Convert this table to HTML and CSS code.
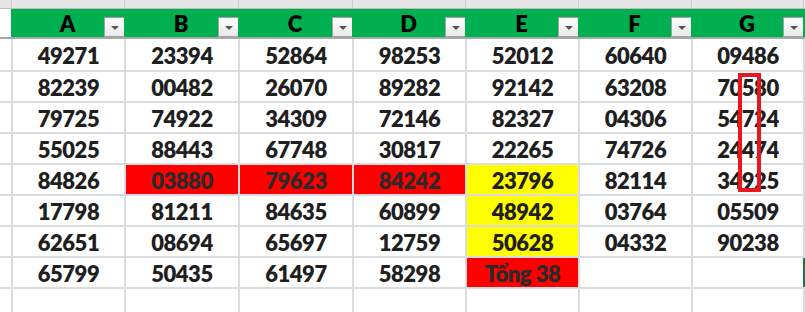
FILE: index.html
```html
<!DOCTYPE html>
<html lang="vi">
<head>
<meta charset="utf-8">
<title>Bảng số</title>
<link rel="stylesheet" href="styles.css">
</head>
<body>
<div class="sheet">
  <div class="grid strip">
    <span class="lead"></span><span class="sc"></span><span class="sc"></span><span class="sc"></span><span class="sc"></span><span class="sc"></span><span class="sc"></span><span class="sc"></span><span class="sc"></span>
  </div>
  <div class="grid hdr">
    <span class="lead"></span>
    <div class="hc"><span class="hl">A</span><span class="fb"></span></div>
    <div class="hc"><span class="hl">B</span><span class="fb"></span></div>
    <div class="hc"><span class="hl">C</span><span class="fb"></span></div>
    <div class="hc"><span class="hl">D</span><span class="fb"></span></div>
    <div class="hc"><span class="hl">E</span><span class="fb"></span></div>
    <div class="hc"><span class="hl">F</span><span class="fb"></span></div>
    <div class="hc"><span class="hl">G</span><span class="fb"></span></div>
    <span class="hend"></span>
  </div>
  <div class="grid row first">
    <span class="lead"></span><span class="c">49271</span><span class="c">23394</span><span class="c">52864</span><span class="c">98253</span><span class="c">52012</span><span class="c">60640</span><span class="c">09486</span><span class="c"></span>
  </div>
  <div class="grid row">
    <span class="lead"></span><span class="c">82239</span><span class="c">00482</span><span class="c">26070</span><span class="c">89282</span><span class="c">92142</span><span class="c">63208</span><span class="c">70580</span><span class="c"></span>
  </div>
  <div class="grid row">
    <span class="lead"></span><span class="c">79725</span><span class="c">74922</span><span class="c">34309</span><span class="c">72146</span><span class="c">82327</span><span class="c">04306</span><span class="c">54724</span><span class="c"></span>
  </div>
  <div class="grid row">
    <span class="lead"></span><span class="c">55025</span><span class="c">88443</span><span class="c">67748</span><span class="c">30817</span><span class="c">22265</span><span class="c">74726</span><span class="c">24474</span><span class="c"></span>
  </div>
  <div class="grid row">
    <span class="lead"></span><span class="c">84826</span><span class="c red">03880</span><span class="c red">79623</span><span class="c red">84242</span><span class="c yellow">23796</span><span class="c">82114</span><span class="c">34925</span><span class="c"></span>
  </div>
  <div class="grid row">
    <span class="lead"></span><span class="c">17798</span><span class="c">81211</span><span class="c">84635</span><span class="c">60899</span><span class="c yellow">48942</span><span class="c">03764</span><span class="c">05509</span><span class="c"></span>
  </div>
  <div class="grid row">
    <span class="lead"></span><span class="c">62651</span><span class="c">08694</span><span class="c">65697</span><span class="c">12759</span><span class="c yellow">50628</span><span class="c">04332</span><span class="c">90238</span><span class="c"></span>
  </div>
  <div class="grid row">
    <span class="lead"></span><span class="c">65799</span><span class="c">50435</span><span class="c">61497</span><span class="c">58298</span><span class="c red">Tổng 38</span><span class="c"></span><span class="c"></span><span class="c active"></span>
  </div>
  <div class="grid row last">
    <span class="lead"></span><span class="c"></span><span class="c"></span><span class="c"></span><span class="c"></span><span class="c"></span><span class="c"></span><span class="c"></span><span class="c"></span>
  </div>
  <span class="mark"></span>
</div>
</body>
</html>
```
FILE: styles.css
```css
html, body {
  margin: 0;
  padding: 0;
  background: #ffffff;
}

.sheet {
  position: relative;
  width: 805px;
  height: 312px;
  overflow: hidden;
  font-family: "Lato", "Open Sans", sans-serif;
  font-weight: 800;
  color: #1f1f1f;
}

.grid {
  display: grid;
  grid-template-columns: 11px 113px 114px 114px 113px 113px 113px 112px 1fr;
}

/* Excel column-letter strip, cut off at the top */
.strip {
  height: 8px;
  background: #e6e6e6;
  border-bottom: 1px solid #bdbdbd;
}
.strip .sc {
  border-left: 1px solid #cdcdcd;
}

/* green header row */
.hdr {
  height: 28px;
  border-bottom: 2px solid #a8a8a8;
}
.hdr .lead {
  background: #ffffff;
}
.hc {
  background: #00b050;
  display: grid;
  align-items: center;
}
.hend {
  background: #00b050;
}
.hl {
  grid-area: 1 / 1;
  justify-self: center;
  font-size: 22px;
  color: #000000;
  line-height: 1;
  padding-top: 1px;
}
.fb {
  grid-area: 1 / 1;
  justify-self: end;
  align-self: end;
  box-sizing: border-box;
  width: 21px;
  height: 20px;
  margin-right: -1px;
  border: 1px solid #a3a3a3;
  background: linear-gradient(#ffffff, #e9e9eb);
  display: flex;
  align-items: center;
  justify-content: center;
}
.fb::after {
  content: "";
  width: 0;
  height: 0;
  border-top: 4px solid #555555;
  border-left: 4px solid transparent;
  border-right: 4px solid transparent;
  margin-top: 1px;
}

/* data rows */
.row {
  height: 29px;
  border-bottom: 2px solid #dadce0;
}
.row.first {
  height: 31px;
}
.row.last {
  height: 30px;
  border-bottom: 0;
}
.c {
  box-sizing: border-box;
  border-left: 2px solid #dadce0;
  display: flex;
  align-items: center;
  justify-content: center;
  font-size: 22px;
  letter-spacing: -0.5px;
  padding-top: 1px;
}
.c.red {
  background: #ff0000;
  color: #2a2a2a;
}
.c.yellow {
  background: #ffff00;
}
.c.active {
  border-left-color: #217346;
}

/* red highlight box drawn on top of column G */
.mark {
  position: absolute;
  left: 738px;
  top: 73px;
  width: 23px;
  height: 119px;
  box-sizing: border-box;
  border: 4px solid #e8161f;
}
```
